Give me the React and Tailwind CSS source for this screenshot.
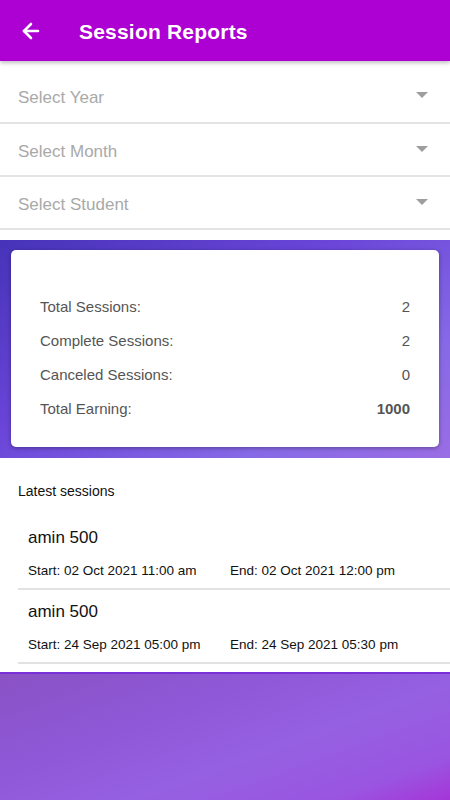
import { ArrowLeft } from "lucide-react";

const selects = ["Select Year", "Select Month", "Select Student"];

const stats = [
  { label: "Total Sessions:", value: "2" },
  { label: "Complete Sessions:", value: "2" },
  { label: "Canceled Sessions:", value: "0" },
  { label: "Total Earning:", value: "1000", bold: true },
];

const sessions = [
  { name: "amin 500", start: "Start: 02 Oct 2021 11:00 am", end: "End: 02 Oct 2021 12:00 pm" },
  { name: "amin 500", start: "Start: 24 Sep 2021 05:00 pm", end: "End: 24 Sep 2021 05:30 pm" },
];

function Caret() {
  return (
    <svg width="12" height="7" viewBox="0 0 12 7" className="mr-[22px]">
      <path d="M0 0 L12 0 L6 6 Z" fill="#9e9e9e" />
    </svg>
  );
}

export default function App() {
  return (
    <div className="w-[450px] h-[800px] bg-white flex flex-col overflow-hidden font-['Liberation_Sans',Arial,sans-serif]">
      {/* header */}
      <header className="h-[61px] shrink-0 bg-[#ad00d2] flex items-center shadow-[0_2px_4px_rgba(0,0,0,0.25)] relative z-10">
        <ArrowLeft size={24} strokeWidth={2.6} className="text-white ml-[19px]" />
        <h1 className="text-white text-[21px] font-bold ml-[36px] mt-[3px] tracking-[0.2px]">Session Reports</h1>
      </header>

      {/* filters */}
      <div className="pt-[8px] pb-[10px]">
        {selects.map((s, i) => (
          <div
            key={s}
            className={`flex items-center justify-between border-b-2 border-[#e4e4e4] ${i === 0 ? "h-[55px]" : "h-[53px]"}`}
          >
            <span className="ml-[18px] mt-[4px] text-[17px] text-[#a9a9a9]">{s}</span>
            <Caret />
          </div>
        ))}
      </div>

      {/* stats */}
      <section className="h-[218px] shrink-0 bg-[linear-gradient(150deg,#4633b8_0%,#6a45d8_40%,#8669e6_75%,#9a6de4_100%)] px-[11px] pt-[10px] pb-[11px]">
        <div className="h-full bg-white rounded-[5px] shadow-[0_1px_4px_rgba(0,0,0,0.35)] pl-[29px] pr-[29px] pt-[40px] flex flex-col">
          {stats.map((s) => (
            <div key={s.label} className="flex justify-between items-center h-[34px] text-[15px] text-[#555]">
              <span>{s.label}</span>
              <span className={s.bold ? "font-bold" : ""}>{s.value}</span>
            </div>
          ))}
        </div>
      </section>

      {/* latest sessions */}
      <section className="shrink-0 bg-white pt-[23px] pb-[8px]">
        <p className="ml-[18px] text-[14px] text-[#111]">Latest sessions</p>
        <div className="mt-[14px] ml-[18px]">
          {sessions.map((s, i) => (
            <div key={i} className="border-b-2 border-[#e2e2e2] pl-[10px] pt-[12px] pb-[10px] text-[#111]">
              <div className="text-[17px] leading-[20px]">{s.name}</div>
              <div className="mt-[15px] flex text-[13.5px] leading-[15px]">
                <span className="w-[202px]">{s.start}</span>
                <span>{s.end}</span>
              </div>
            </div>
          ))}
        </div>
      </section>

      {/* bottom gradient */}
      <div className="flex-1 border-t-2 border-[#7a30d8] bg-[linear-gradient(160deg,#8a52c4_0%,#8f58d8_35%,#9560e2_60%,#9a55e0_85%,#a535d8_100%)]" />
    </div>
  );
}
